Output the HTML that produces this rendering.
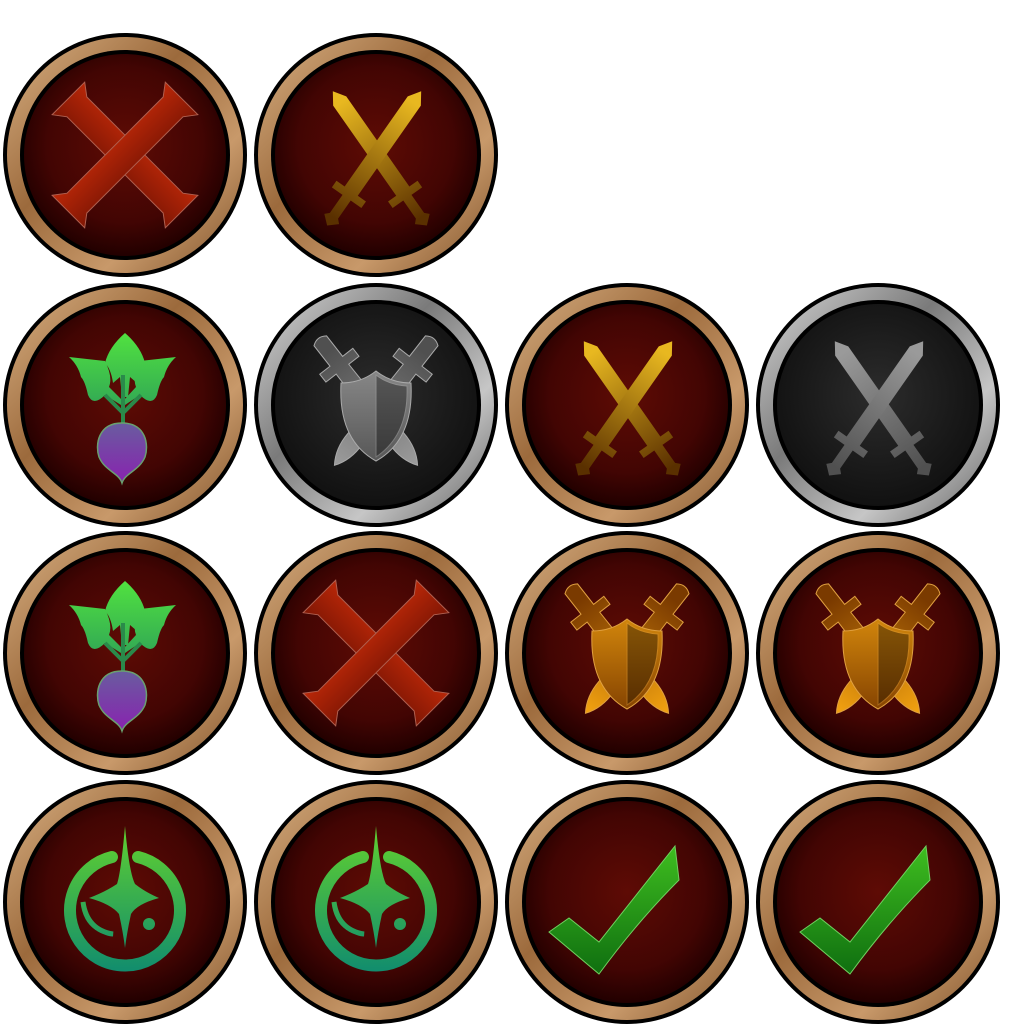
<!DOCTYPE html>
<html><head><meta charset="utf-8"><style>html,body{margin:0;padding:0;background:#fff}svg{display:block}</style></head><body>
<svg width="1024" height="1024" viewBox="0 0 1024 1024" xmlns="http://www.w3.org/2000/svg">
<defs>
<radialGradient id="red" cx="50%" cy="45%" r="55%"><stop offset="0" stop-color="#5e0b05"/><stop offset="0.7" stop-color="#420503"/><stop offset="1" stop-color="#220000"/></radialGradient>
<radialGradient id="dark" cx="50%" cy="45%" r="55%"><stop offset="0" stop-color="#2c2c2c"/><stop offset="1" stop-color="#111"/></radialGradient>
<linearGradient id="wood" x1="0" y1="0" x2="1" y2="1"><stop offset="0" stop-color="#d9b184"/><stop offset="0.4" stop-color="#9c6a3c"/><stop offset="0.7" stop-color="#c8996a"/><stop offset="1" stop-color="#7d5028"/></linearGradient>
<linearGradient id="silver" x1="0" y1="0" x2="1" y2="1"><stop offset="0" stop-color="#d8d8d8"/><stop offset="0.4" stop-color="#7a7a7a"/><stop offset="0.7" stop-color="#c6c6c6"/><stop offset="1" stop-color="#5e5e5e"/></linearGradient>
<linearGradient id="xgu" x1="0" y1="-65" x2="0" y2="65" gradientUnits="userSpaceOnUse"><stop offset="0" stop-color="#f0380c"/><stop offset="1" stop-color="#4a0600"/></linearGradient>
<linearGradient id="gold" x1="0" y1="-70" x2="0" y2="70" gradientUnits="userSpaceOnUse"><stop offset="0" stop-color="#e8b820"/><stop offset="1" stop-color="#5a3000"/></linearGradient>
<linearGradient id="grey" x1="0" y1="-70" x2="0" y2="70" gradientUnits="userSpaceOnUse"><stop offset="0" stop-color="#9a9a9a"/><stop offset="1" stop-color="#505050"/></linearGradient>
<linearGradient id="orange" x1="0" y1="-70" x2="0" y2="70" gradientUnits="userSpaceOnUse"><stop offset="0" stop-color="#f0a010"/><stop offset="1" stop-color="#7a3a00"/></linearGradient>
<linearGradient id="leaf" x1="0" y1="-70" x2="0" y2="20" gradientUnits="userSpaceOnUse"><stop offset="0" stop-color="#50e040"/><stop offset="1" stop-color="#2a9a5a"/></linearGradient>
<linearGradient id="beet" x1="0" y1="20" x2="0" y2="80" gradientUnits="userSpaceOnUse"><stop offset="0" stop-color="#6a5aa0"/><stop offset="1" stop-color="#8a20b0"/></linearGradient>
<linearGradient id="pw" x1="0" y1="-75" x2="0" y2="70" gradientUnits="userSpaceOnUse"><stop offset="0" stop-color="#60d030"/><stop offset="1" stop-color="#0e8a70"/></linearGradient>
<linearGradient id="chk" x1="0" y1="-60" x2="0" y2="70" gradientUnits="userSpaceOnUse"><stop offset="0" stop-color="#40c020"/><stop offset="1" stop-color="#107010"/></linearGradient>

<g id="rimW"><circle r="122" fill="#000"/><circle r="118" fill="url(#wood)"/><circle r="105" fill="#000"/><circle r="101" fill="url(#red)"/></g>
<g id="rimS"><circle r="122" fill="#000"/><circle r="118" fill="url(#silver)"/><circle r="105" fill="#000"/><circle r="101" fill="url(#dark)"/></g>

<polygon id="bar" points="-80,-23 -68,-14 68,-14 80,-23 80,23 68,14 -68,14 -80,23"/>
<g id="X" fill="url(#xgu)" stroke="#b06050" stroke-width="1"><use href="#bar" transform="rotate(45)"/><use href="#bar" transform="rotate(-45)"/></g>

<path id="sword" d="M0,-84 L8,-72 L8,38 L18,38 L18,46 L5,46 L5,68 L9,72 L0,80 L-9,72 L-5,68 L-5,46 L-18,46 L-18,38 L-8,38 L-8,-72 Z"/>
<path id="sword2" d="M0,-74 Q10,-60 9,-40 L8,48 L21,48 L21,58 L8,58 L8,84 Q0,90 -8,84 L-8,58 L-21,58 L-21,48 L-8,48 L-9,-40 Q-10,-60 0,-74 Z"/>
<g id="swords"><use href="#sword" transform="translate(5,5) rotate(-35)"/><use href="#sword" transform="translate(-3,5) rotate(35)"/></g>

<g id="shieldS">
<use href="#sword2" transform="translate(-4,2) rotate(142)"/>
<use href="#sword2" transform="translate(4,2) rotate(-142)"/>
<path d="M-35,-22 Q-15,-22 0,-34 Q15,-22 35,-22 Q38,35 0,56 Q-38,35 -35,-22 Z"/>
<path d="M0,-30 Q13,-20 31,-19 Q33,30 0,52 Z" fill="#000" opacity="0.35"/>
</g>

<g id="beetI">
<path d="M0,-72 Q16,-58 20,-42 Q14,-36 12,-22 L5,-28 L3,-8 L-3,-8 L-5,-28 L-12,-22 Q-14,-36 -20,-42 Q-16,-58 0,-72 Z" fill="url(#leaf)"/>
<path d="M-56,-48 L-20,-44 Q-12,-28 -16,-18 L-2,-4 L-4,0 L-20,-10 Q-32,2 -37,-10 Q-40,-24 -44,-28 Q-47,-40 -56,-48 Z" fill="url(#leaf)"/>
<path d="M51,-48 L15,-44 Q7,-28 11,-18 L-2,-4 L0,0 L15,-10 Q27,2 32,-10 Q35,-24 39,-28 Q42,-40 51,-48 Z" fill="url(#leaf)"/>
<path d="M-2,-30 L-2,20 M-2,8 L-20,-10 M-2,8 L16,-10" stroke="#2a8a4a" stroke-width="4" fill="none"/>
<path d="M-3,18 C-27,18 -30,40 -26,52 C-20,66 -6,68 -3,78 C0,68 14,66 20,52 C24,40 21,18 -3,18 Z" fill="url(#beet)" stroke="#6aa070" stroke-width="1.5"/>
</g>

<g id="power" fill="url(#pw)">
<path d="M-13,-50 A55,55 0 1 0 13,-50" fill="none" stroke="url(#pw)" stroke-width="12" stroke-linecap="round" transform="translate(0,5)"/>
<path d="M0,-76 Q4,-30 10,-18 Q20,-10 34,-4 Q12,2 6,12 Q2,30 0,46 Q-2,30 -6,12 Q-14,2 -36,-4 Q-20,-10 -8,-18 Q-4,-30 0,-76 Z"/>
<path d="M-42,0 Q-38,28 -12,32 Q-18,32 -28,26 Q-40,18 -42,0 Z" stroke="url(#pw)" stroke-width="5"/>
<circle cx="24" cy="22" r="6"/>
</g>

<path id="check" d="M-78,30 L-58,16 L-28,40 L48,-56 L52,-22 Q10,20 -28,72 Z" fill="url(#chk)" stroke="#70d060" stroke-width="1"/>
</defs>

<g transform="translate(125,155)"><use href="#rimW"/><use href="#X"/></g>
<g transform="translate(376,155)"><use href="#rimW"/><g fill="url(#gold)"><use href="#swords"/></g></g>

<g transform="translate(125,405)"><use href="#rimW"/><use href="#beetI"/></g>
<g transform="translate(376,405)"><use href="#rimS"/><g fill="url(#grey)" stroke="#aaa" stroke-width="1"><use href="#shieldS"/></g></g>
<g transform="translate(627,405)"><use href="#rimW"/><g fill="url(#gold)"><use href="#swords"/></g></g>
<g transform="translate(878,405)"><use href="#rimS"/><g fill="url(#grey)"><use href="#swords"/></g></g>

<g transform="translate(125,653)"><use href="#rimW"/><use href="#beetI"/></g>
<g transform="translate(376,653)"><use href="#rimW"/><use href="#X"/></g>
<g transform="translate(627,653)"><use href="#rimW"/><g fill="url(#orange)" stroke="#e0a040" stroke-width="1"><use href="#shieldS"/></g></g>
<g transform="translate(878,653)"><use href="#rimW"/><g fill="url(#orange)" stroke="#e0a040" stroke-width="1"><use href="#shieldS"/></g></g>

<g transform="translate(125,902)"><use href="#rimW"/><use href="#power"/></g>
<g transform="translate(376,902)"><use href="#rimW"/><use href="#power"/></g>
<g transform="translate(627,902)"><use href="#rimW"/><use href="#check"/></g>
<g transform="translate(878,902)"><use href="#rimW"/><use href="#check"/></g>
</svg>
</body></html>
